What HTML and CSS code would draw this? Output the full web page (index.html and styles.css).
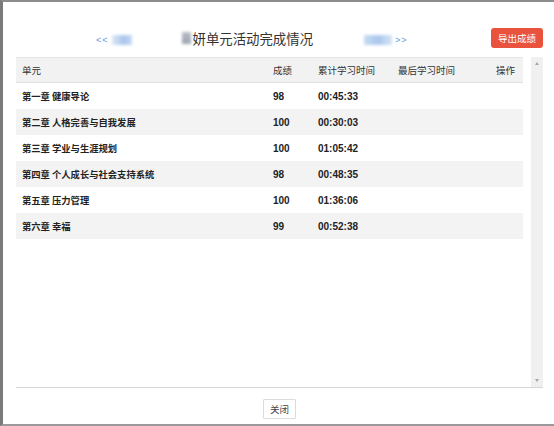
FILE: index.html
```html
<!DOCTYPE html>
<html lang="zh">
<head>
<meta charset="utf-8">
<link rel="stylesheet" href="styles.css">
</head>
<body>
<div class="dialog">
  <div class="head">
    <div class="nav">
      <span class="arrow">&lt;&lt;</span>
      <span class="blur blur-prev"></span>
      <span class="blur blur-title"></span>
      <span class="title">妍单元活动完成情况</span>
      <span class="blur blur-next"></span>
      <span class="arrow">&gt;&gt;</span>
    </div>
    <button class="export">导出成绩</button>
  </div>
  <div class="scroll">
    <div class="table-wrap">
      <table class="grid">
        <thead>
          <tr>
            <th class="c1">单元</th>
            <th class="c2">成绩</th>
            <th class="c3">累计学习时间</th>
            <th class="c4">最后学习时间</th>
            <th class="c5">操作</th>
          </tr>
        </thead>
        <tbody>
          <tr><td>第一章 健康导论</td><td class="num">98</td><td class="num">00:45:33</td><td></td><td></td></tr>
          <tr><td>第二章 人格完善与自我发展</td><td class="num">100</td><td class="num">00:30:03</td><td></td><td></td></tr>
          <tr><td>第三章 学业与生涯规划</td><td class="num">100</td><td class="num">01:05:42</td><td></td><td></td></tr>
          <tr><td>第四章 个人成长与社会支持系统</td><td class="num">98</td><td class="num">00:48:35</td><td></td><td></td></tr>
          <tr><td>第五章 压力管理</td><td class="num">100</td><td class="num">01:36:06</td><td></td><td></td></tr>
          <tr><td>第六章 幸福</td><td class="num">99</td><td class="num">00:52:38</td><td></td><td></td></tr>
        </tbody>
      </table>
    </div>
    <div class="scrollbar">
      <span class="tri up"></span>
      <span class="tri down"></span>
    </div>
  </div>
  <div class="foot">
    <button class="close">关闭</button>
  </div>
</div>
</body>
</html>
```

FILE: styles.css
```css
html, body {
  margin: 0;
  padding: 0;
  background: #ffffff;
}
body {
  font-family: "Noto Sans CJK SC", "Liberation Sans", sans-serif;
  color: #333;
}
.dialog {
  width: 554px;
  height: 426px;
  box-sizing: border-box;
  border-top: 2px solid #8c8c8c;
  border-left: 3px solid #7a7a7a;
  border-bottom: 2px solid #9a9a9a;
  display: flex;
  flex-direction: column;
  background: #fff;
}
.head {
  height: 55px;
  box-sizing: border-box;
  padding: 26px 11px 0 93px;
  display: flex;
  align-items: flex-start;
}
.nav {
  display: flex;
  align-items: center;
  height: 20px;
}
.arrow {
  font-family: "Liberation Sans", sans-serif;
  font-size: 9px;
  color: #5d9be0;
  letter-spacing: 1px;
  margin-top: 4px;
}
.blur {
  display: inline-block;
  height: 10px;
  filter: blur(1.5px);
}
.blur-prev {
  width: 20px;
  margin-left: 3px;
  margin-top: 4px;
  background: linear-gradient(90deg, #dce8f7, #a9c6ec 60%, #c9dcf4);
}
.blur-title {
  width: 9px;
  height: 12px;
  margin-left: 50px;
  background: linear-gradient(180deg, #b8bec8, #9aa3b0);
}
.title {
  font-size: 13.4px;
  color: #333;
  margin-left: 2px;
  line-height: 20px;
}
.blur-next {
  width: 28px;
  margin-left: 51px;
  margin-top: 4px;
  background: linear-gradient(90deg, #c9dcf4, #a9c6ec 50%, #d3e3f6);
}
.blur-next + .arrow {
  margin-left: 3px;
}
.export {
  margin-left: auto;
  margin-top: 0;
  width: 52px;
  height: 20px;
  border: none;
  border-radius: 3px;
  background: #e9533d;
  color: #fff;
  font-family: "Noto Sans CJK SC", sans-serif;
  font-size: 9.5px;
  padding: 0;
  position: relative;
  top: 0;
}
.scroll {
  height: 331px;
  box-sizing: border-box;
  margin: 0 11px 0 13px;
  border-bottom: 1px solid #d6d6d6;
  display: flex;
  gap: 8px;
}
.table-wrap {
  width: 507px;
}
.grid {
  width: 507px;
  border-collapse: collapse;
  table-layout: fixed;
}
.grid th {
  height: 24px;
  background: #f2f2f2;
  border-top: 1px solid #e4e4e4;
  border-bottom: 1px solid #e0e0e0;
  font-weight: normal;
  font-size: 9.5px;
  color: #333;
  text-align: left;
  padding: 0 0 0 6px;
}
.c1 { width: 245px; }
.c2 { width: 39px; }
.c3 { width: 74px; }
.c4 { width: 92px; }
.c5 { width: 27px; }
.grid td {
  height: 26px;
  padding: 0 0 0 6px;
  font-size: 9.3px;
  font-weight: bold;
  color: #222;
  white-space: nowrap;
}
.grid td.num {
  font-family: "Liberation Sans", sans-serif;
  font-size: 10px;
}
.grid tbody tr:nth-child(even) td {
  background: #f3f3f3;
}
.scrollbar {
  width: 12px;
  background: #f0f0f0;
  position: relative;
}
.tri {
  position: absolute;
  left: 4px;
  width: 0;
  height: 0;
  border-left: 2.5px solid transparent;
  border-right: 2.5px solid transparent;
}
.tri.up {
  top: 5px;
  border-bottom: 3px solid #a8a8a8;
}
.tri.down {
  bottom: 5px;
  border-top: 3px solid #a8a8a8;
}
.foot {
  display: flex;
  justify-content: center;
  padding-top: 11px;
}
.close {
  width: 33px;
  height: 20px;
  padding: 0;
  background: #fff;
  border: 1px solid #dcdcdc;
  border-radius: 1px;
  font-family: "Noto Sans CJK SC", sans-serif;
  font-size: 9.5px;
  color: #444;
  margin-left: 2px;
}
```
